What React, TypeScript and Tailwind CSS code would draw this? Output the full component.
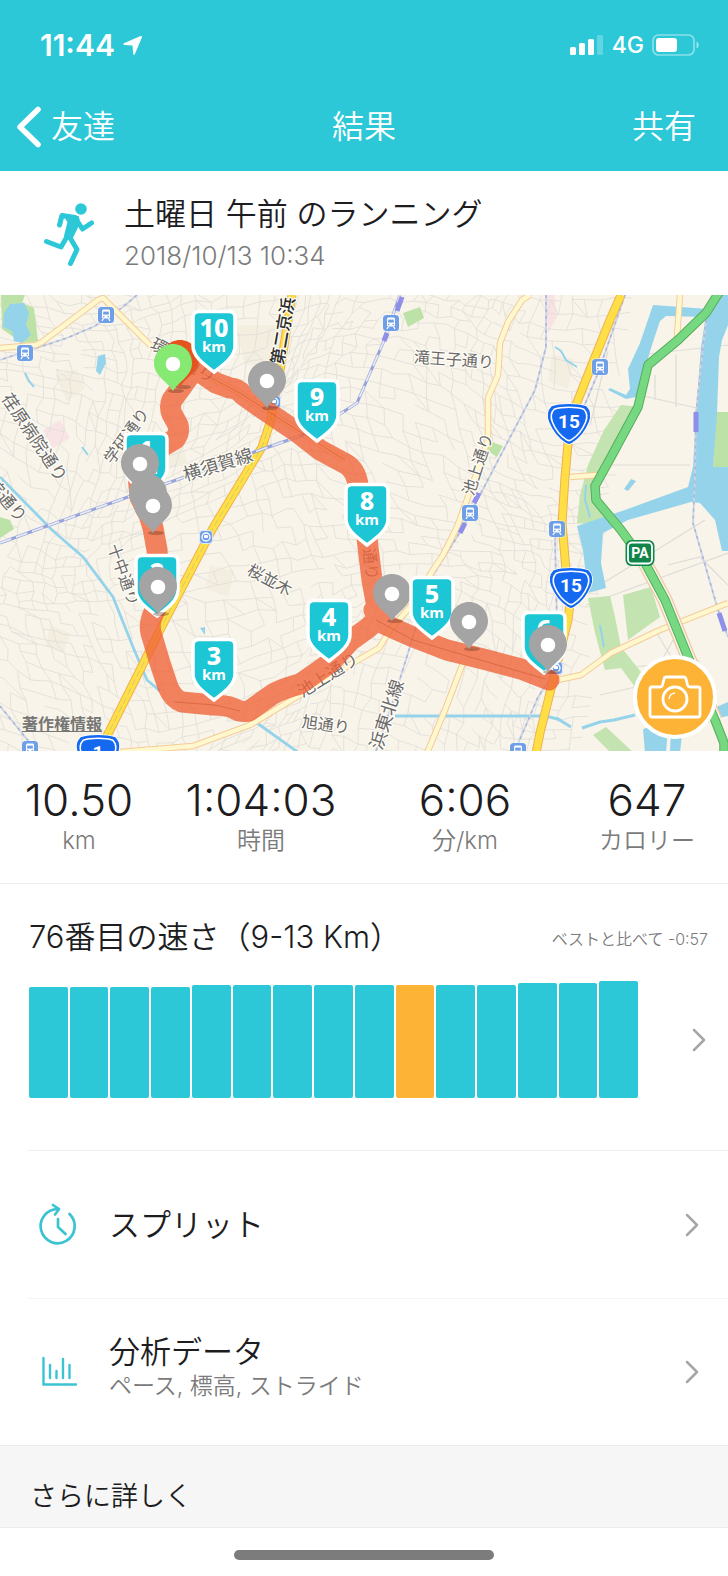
import React from "react";

const sans = "font-['Inter','Noto_Sans_CJK_JP',sans-serif]";

/* ---------- map geometry ---------- */

function createRandom(seed: number) {
  let s = seed;
  return () => {
    s = (s * 1664525 + 1013904223) % 4294967296;
    return s / 4294967296;
  };
}

/** Irregular mesh of minor streets, bent by a slow wave so blocks change direction. */
function buildStreets(): string {
  const rnd = createRandom(41);
  const step = 12;
  const cols = 60;
  const rows = 50;
  const points: [number, number][][] = [];
  for (let j = 0; j <= rows; j++) {
    const row: [number, number][] = [];
    for (let i = 0; i <= cols; i++) {
      const u = i * step - 60;
      const v = j * step - 60;
      row.push([
        u + 26 * Math.sin(v / 62 + u / 140) + 10 * Math.sin(u / 33) + (rnd() - 0.5) * 6,
        v + 30 * Math.sin(u / 75) + 12 * Math.cos(v / 41 + u / 60) + (rnd() - 0.5) * 6,
      ]);
    }
    points.push(row);
  }
  const out: string[] = [];
  const line = (a: [number, number], b: [number, number]) =>
    out.push(`M${a[0].toFixed(1)},${a[1].toFixed(1)}L${b[0].toFixed(1)},${b[1].toFixed(1)}`);
  for (let j = 0; j < rows; j++) {
    for (let i = 0; i < cols; i++) {
      const p = points[j][i];
      if (p[0] > 625 - p[1] * 0.12) continue;
      if (rnd() < 0.8) line(p, points[j][i + 1]);
      if (rnd() < 0.68) line(p, points[j + 1][i]);
      if (rnd() < 0.08) line(p, points[j + 1][i + 1]);
    }
  }
  return out.join("");
}

const STREETS = buildStreets();

const CREAM_ROADS = [
  "M0,53 L36,50 L42,47 L98,5 L103,3 L150,50 L165,62 L200,77 L240,98 L297,135 L345,165",
  "M530,0 L522,5 L508,27 L500,48 L498,80 L488,103 L488,145 L473,188 L457,232 L443,260 L433,275 L410,312 L390,335 L379,353 L353,368 L250,430 L193,451 L120,457",
  "M463,368 L445,415 L427,458",
  "M553,386 L581,380 L611,358 L660,335 L728,308",
  "M680,0 L677,42",
  "M570,182 L598,180",
];

const MAJOR_ROADS = [
  "M292,0 L281,70 L270,128 L262,152 L213,233 L160,335 L105,445",
  "M621,0 L610,25 L591,72 L576,110 L568,148 L565,182 L562,228 L566,275 L570,308 L568,325 L558,365 L550,398 L540,438 L536,458",
];

const HIGHWAY =
  "M720,-4 L706,18 L678,45 L648,70 L638,112 L611,162 L595,191 L596,205 L621,235 L645,268 L665,305 L688,362 L715,425 L724,448 L724,458";

const RAILS = [
  "M0,248 L33,236 L128,202 L182,183 L260,155 L303,140 L340,119 L357,108 L370,78 L383,48 L400,0",
];

const THIN_RAILS = [
  "M137,0 L123,12 L95,31 L67,43 L0,65",
  "M546,0 L546,52 L535,95 L505,152 L480,200 L462,234 L430,285 L412,345 L395,400 L376,456",
  "M625,0 L598,78 L570,145 L560,215 L555,245 L558,372 L538,402 L515,456",
  "M706,25 L696,118 L695,182 L693,228 L718,315 L728,342",
  "M0,411 L30,448",
];

const ROUTE =
  "M196,74 Q188,82 183,90 L172,105 Q169,112 172,119 L178,130 Q180,138 175,144 L160,153 L145,172 Q137,182 139,190 L140,202 L149,220 L153,233 L157,255 L159,285 Q162,298 159,306 L152,322 Q149,331 151,338 L160,368 L168,392 Q173,404 182,407 L213,410 Q225,410 233,413 Q241,418 249,416 L273,399 Q284,393 300,389 L330,368 L350,346 L368,333 Q380,324 377,312 L372,285 L368,252 L364,215 L358,190 Q356,175 346,169 L320,155 L297,137 L260,112 L243,100 Q238,93 230,93 L216,88 L200,77 M374,315 Q378,327 386,330 L413,342 L447,355 L487,365 L521,374 L549,385";

type Label = { text: string; x: number; y: number; angle: number; size: number; strong?: boolean };

/* x / y is the middle of the first glyph */
const LABELS: Label[] = [
  { text: "環七通り", x: 160, y: 52, angle: 29, size: 18 },
  { text: "荏原病院通り", x: 11, y: 107, angle: 56, size: 17 },
  { text: "院通り", x: -4, y: 192, angle: 49, size: 17 },
  { text: "学研通り", x: 112, y: 160, angle: -54, size: 16 },
  { text: "横須賀線", x: 192, y: 177, angle: -17, size: 18 },
  { text: "第二京浜", x: 278, y: 61, angle: -80, size: 17, strong: true },
  { text: "滝王子通り", x: 422, y: 62, angle: 4, size: 16 },
  { text: "池上通り", x: 470, y: 192, angle: -72, size: 16 },
  { text: "十中通り", x: 116, y: 257, angle: 70, size: 16 },
  { text: "池上通り", x: 306, y: 393, angle: -32, size: 17 },
  { text: "桜並木", x: 256, y: 277, angle: 28, size: 16 },
  { text: "旭通り", x: 310, y: 427, angle: 8, size: 16 },
  { text: "浜東北線", x: 378, y: 445, angle: -72, size: 18 },
  { text: "通り", x: 370, y: 261, angle: 83, size: 16 },
];

const STATIONS: [number, number][] = [
  [106, 20],
  [25, 58],
  [391, 28],
  [470, 218],
  [600, 72],
  [557, 234],
  [30, 454],
  [518, 456],
];

function Station({ x, y }: { x: number; y: number }) {
  return (
    <g transform={`translate(${x - 8} ${y - 8})`}>
      <rect x="-0.5" y="-0.5" width="17" height="17" rx="4" fill="#fff" opacity="0.7" />
      <rect width="16" height="16" rx="3.5" fill="#6f9fe6" />
      <path d="M5 2.5h6l1 1v7l-1 1H5l-1-1v-7z" fill="#fff" />
      <rect x="5.2" y="4.6" width="5.6" height="3" fill="#6f9fe6" />
      <circle cx="5.8" cy="9.6" r="0.8" fill="#6f9fe6" />
      <circle cx="10.2" cy="9.6" r="0.8" fill="#6f9fe6" />
      <path d="M5.5 11.5 4 14M10.5 11.5 12 14" stroke="#fff" strokeWidth="1.3" />
    </g>
  );
}

function RoundStation({ x, y }: { x: number; y: number }) {
  return (
    <g transform={`translate(${x} ${y})`}>
      <rect x="-6.5" y="-6.5" width="13" height="13" rx="3.5" fill="#6f9fe6" stroke="#dfe9f8" />
      <circle r="4" fill="none" stroke="#fff" strokeWidth="1.3" />
      <rect x="-2" y="-2" width="4" height="3" rx="0.8" fill="#fff" />
    </g>
  );
}

function RouteShield({ x, y, text }: { x: number; y: number; text: string }) {
  const shape =
    "M-17 -17C-8 -20 8 -20 17 -17C21 -13 21 -7 19 -2C15 8 9 14 3 18C1 19.500 -1 19.500 -3 18C-9 14 -15 8 -19 -2C-21 -7 -21 -13 -17 -17Z";
  return (
    <g transform={`translate(${x} ${y})`}>
      <path d={shape} fill="#1568f0" stroke="#fff" strokeWidth="3" />
      <path d={shape} fill="#1568f0" stroke="#1568f0" strokeWidth="1.500" />
      <path d={shape} transform="scale(0.87)" fill="#1568f0" stroke="#fff" strokeWidth="1.800" />
      <text
        y="4"
        textAnchor="middle"
        className="fill-white font-['Roboto','Liberation_Sans',sans-serif] text-[19px] font-bold"
      >
        {text}
      </text>
    </g>
  );
}

function KmBadge({ x, y, n }: { x: number; y: number; n: number }) {
  return (
    <g transform={`translate(${x} ${y})`}>
      <path
        d="M-15 1.500H15Q21 1.500 21 7.500V36C21 46 12 53 0 62C-12 53 -21 46 -21 36V7.500Q-21 1.500 -15 1.500Z"
        fill="#1cc6d5"
        stroke="#fff"
        strokeWidth="3.500"
      />
      <text y="27" textAnchor="middle" className="fill-white font-['Noto_Sans',sans-serif] text-[25px] font-extrabold">
        {n}
      </text>
      <text y="42" textAnchor="middle" className="fill-white font-['Noto_Sans',sans-serif] text-[15px] font-bold">
        km
      </text>
    </g>
  );
}

function Pin({ x, y, color = "#a4a4a4", dot = true }: { x: number; y: number; color?: string; dot?: boolean }) {
  return (
    <g transform={`translate(${x} ${y})`}>
      <ellipse cx="3" cy="27" rx="8" ry="2" fill="#5a3020" opacity="0.35" />
      <path d="M0 -20C11 -20 19 -11 19 -1C19 12 6 17 0 27C-6 17 -19 12 -19 -1C-19 -11 -11 -20 0 -20Z" fill={color} />
      {dot && <circle r="7.300" fill="#fff" />}
    </g>
  );
}

function RouteMap() {
  return (
    <svg viewBox="0 0 728 456" className="block h-auto w-full" role="img" aria-label="ルート">
      <rect width="728" height="456" fill="#f8f4ea" />
      <path
        d="M235 30h50v40h-40zM55 80l22-6 8 20-18 12zM210 270l24 6-6 26-22-8zM50 330l20 8-6 20-18-6zM150 150l32-4 6 24-30 4zM552 60l22 4-6 30-20-8z"
        fill="#f3eee0"
      />
      <path d="M43 135 60 125 70 143 53 153Z" fill="#f8e4e4" />
      <path d="M546 0H554L557 22 548 38Z" fill="#f8e2e4" />
      <path d={STREETS} fill="none" stroke="#dfddd7" strokeWidth="0.8" />
      <path
        d="M608 56 590 130M572 150 560 228M630 98 728 120M655 80V105M676 60V112M595 170H690M586 310 728 258M600 290 705 225M620 373 700 366M655 335 700 410M640 60 728 50M600 400 690 380M648 390 676 340M668 270 700 262 728 290"
        fill="none"
        stroke="#dddcd6"
        strokeWidth="1.200"
      />

      {/* parks */}
      <path d="M1 0H25L22 8 34 13 38 46 22 48 2 34Z" fill="#bde2a8" />
      <path d="M0 222 10 225 14 234 0 243Z" fill="#bde2a8" />
      <path d="M403 18 420 12 424 23 408 32Z" fill="#bde2a8" />
      <path d="M489 146 503 151 497 162 488 156Z" fill="#bde2a8" />
      <path d="M621 110 640 112 614 160 597 190 600 206 620 226 606 229 577 228 580 200 588 170 604 135Z" fill="#c3e4b0" />
      <path d="M716 117H728V172H713Z" fill="#bde2a8" />
      <path d="M588 303 610 301 615 322 621 352 645 382 635 392 621 373 605 375 595 338Z" fill="#c3e4b0" />
      <path d="M623 300 651 292 660 322 628 345Z" fill="#c3e4b0" />
      <path d="M593 440 606 432 634 458H611Z" fill="#c3e4b0" />

      {/* water */}
      <g fill="#95d3ea">
        <path d="M4 18 10 9 24 8 29 18 26 30 31 40 22 48 14 46 12 36 3 32Z" />
        <path d="M98 61 105 59 106 68 100 80 96 76Z" />
        <path d="M653 10 708 14 704 22 666 21 660 26 652 50 642 84 636 102 626 104 608 95 610 93 626 100 630 94 628 74 640 48Z" />
        <path d="M720 0H728V30L722 45 719 62 717 118 713 172H728V256L722 256 715 225 700 208 691 207 628 225 603 238 601 268 606 293 588 298 583 255 577 231 625 215 688 192 693 172 696 118 701 52 706 20Z" />
        <path d="M643 434 656 430 668 432 666 458H645ZM671 432 683 430 680 458H670Z" />
        <path d="M714 413 728 407V421L718 423ZM624 194 631 184 636 186 628 196Z" />
        <path d="M200 333 205 332 205 340Z" />
      </g>
      <g fill="none" stroke="#95d3ea">
        <path d="M0 182 52 235 83 262 113 302 133 352 147 385 160 396M257 428 299 458" strokeWidth="2.800" />
        <path d="M395 421H480M478 421H545L558 424 571 432M582 433 600 427 614 425 635 420" strokeWidth="3" />
        <path d="M555 52 561 56 566 65 577 72M25 78 29 86 34 92M82 152 88 160M586 190 585 205 590 222M600 330 604 352" strokeWidth="2" />
      </g>

      {/* roads */}
      <g fill="none" strokeLinejoin="round">
        {THIN_RAILS.map((d) => (
          <g key={d}>
            <path d={d} stroke="#ccd4e4" strokeWidth="1.800" />
            <path d={d} stroke="#a9b7dc" strokeWidth="1.600" strokeDasharray="3 4" />
          </g>
        ))}
        {CREAM_ROADS.map((d) => (
          <path key={d} d={d} stroke="#f4cc98" strokeWidth="6.500" />
        ))}
        {CREAM_ROADS.map((d) => (
          <path key={d} d={d} stroke="#fff8cf" strokeWidth="4.500" />
        ))}
        {MAJOR_ROADS.map((d) => (
          <g key={d}>
            <path d={d} stroke="#efb14e" strokeWidth="9" />
            <path d={d} stroke="#ffdf45" strokeWidth="7" />
          </g>
        ))}
        <path d={MAJOR_ROADS[0]} stroke="#b9c37a" strokeWidth="1" strokeDasharray="7 3" opacity="0.7" />
        {RAILS.map((d) => (
          <g key={d}>
            <path d={d} stroke="#97a3da" strokeWidth="3" />
            <path d={d} stroke="#e6eaf5" strokeWidth="1.800" strokeDasharray="12 5" />
          </g>
        ))}
        <path d="M645 268 665 305 688 362 715 425" stroke="#f0c8a0" strokeWidth="15" />
        <path d="M645 268 665 305 688 362 715 425" stroke="#f8f4ea" strokeWidth="12.500" />
        <path d={HIGHWAY} stroke="#55ad5c" strokeWidth="9.500" />
        <path d={HIGHWAY} stroke="#76d880" strokeWidth="7.500" />
        <path
          d="M402 2 397 16M387 38 384 46M479 198 474 208M465 228 460 238M696 117V137M719 318 725 336"
          stroke="#8e8fe8"
          strokeWidth="5"
        />
      </g>

      {LABELS.map((l, i) => (
        <text
          key={i}
          transform={`translate(${l.x} ${l.y}) rotate(${l.angle})`}
          x={-l.size / 2}
          y={l.size * 0.38}
          fontSize={l.size}
          fontWeight={l.strong ? 500 : 400}
          fill={l.strong ? "#2c2c2c" : "#6a6a6a"}
          stroke="#fffdf6"
          strokeWidth="2.500"
          strokeLinejoin="round"
          paintOrder="stroke"
          className="font-['Noto_Sans_CJK_JP',sans-serif]"
        >
          {l.text}
        </text>
      ))}

      {STATIONS.map(([x, y]) => (
        <Station key={`${x}-${y}`} x={x} y={y} />
      ))}
      <RoundStation x={206} y={242} />
      <RoundStation x={274} y={107} />
      <RoundStation x={556} y={373} />

      <RouteShield x={569} y={129} text="15" />
      <RouteShield x={571} y={293} text="15" />
      <RouteShield x={98} y={460} text="1" />
      <g transform="translate(640 258)">
        <rect x="-14.500" y="-13" width="29" height="26" rx="6" fill="#11854a" />
        <rect x="-12" y="-10.500" width="24" height="21" rx="4" fill="none" stroke="#fff" strokeWidth="1.800" />
        <text y="5" textAnchor="middle" className="fill-white font-['Roboto',sans-serif] text-[14px] font-bold">
          PA
        </text>
      </g>

      <g opacity="0.8">
        <path d={ROUTE} fill="none" stroke="#f0643a" strokeWidth="21" strokeLinejoin="round" strokeLinecap="round" />
      </g>
      <path
        d="M200 77 240 98 297 135 345 165M376 325 413 345 470 362 545 384M175 407 215 410 240 416"
        fill="none"
        stroke="#c9502f"
        strokeWidth="1"
        opacity="0.5"
      />

      <Pin x={180} y={65} color="#e4541f" dot={false} />
      <KmBadge x={214} y={15} n={10} />
      <KmBadge x={317} y={84} n={9} />
      <KmBadge x={367} y={188} n={8} />
      <KmBadge x={214} y={343} n={3} />
      <KmBadge x={329} y={304} n={4} />
      <Pin x={392} y={299} />
      <KmBadge x={432} y={281} n={5} />
      <KmBadge x={146} y={137} n={1} />
      <KmBadge x={157} y={259} n={2} />
      <KmBadge x={544} y={316} n={6} />
      <Pin x={173} y={69} color="#86ea72" />
      <Pin x={267} y={86} />
      <Pin x={140} y={169} />
      <Pin x={148} y={199} dot={false} />
      <Pin x={153} y={211} />
      <Pin x={158} y={292} />
      <Pin x={469} y={327} />
      <Pin x={548} y={350} />
    </svg>
  );
}

/* ---------- icons ---------- */

function LocationArrow() {
  return (
    <svg viewBox="0 0 20 20" className="size-5" fill="#fff" aria-hidden="true">
      <path d="M18.700 1.300a1 1 0 0 0-1.100-.3L.9 8.300c-.9.400-.7 1.500.3 1.600l8.300.6.700 8.400c.1 1 1.200 1.200 1.600.3l7.100-16.800a1 1 0 0 0-.2-1.100z" />
    </svg>
  );
}

function Signal() {
  return (
    <svg viewBox="0 0 34 22" className="h-[22px] w-[34px]" fill="#fff" aria-hidden="true">
      <rect x="0" y="13" width="6" height="8" rx="1.500" />
      <rect x="9" y="9" width="6" height="12" rx="1.500" />
      <rect x="18" y="5" width="6" height="16" rx="1.500" />
      <rect x="27" y="1" width="6" height="20" rx="1.500" opacity="0.25" />
    </svg>
  );
}

function Battery() {
  return (
    <svg viewBox="0 0 48 22" className="h-[22px] w-12" aria-hidden="true">
      <rect x="1" y="1" width="41" height="20" rx="5.500" fill="none" stroke="#fff" strokeWidth="1.700" opacity="0.45" />
      <rect x="4" y="4" width="21" height="14" rx="3" fill="#fff" />
      <path d="M44.500 7.500c3 1 3 6 0 7z" fill="#fff" opacity="0.5" />
    </svg>
  );
}

function Runner() {
  return (
    <svg viewBox="0 0 52 64" className="h-16 w-[52px]" aria-hidden="true">
      <circle cx="37" cy="6" r="5.800" fill="#2dc8d8" />
      <g fill="none" stroke="#2dc8d8" strokeLinecap="round" strokeLinejoin="round" strokeWidth="5">
        <path d="M15.500 22 18 12.500 31 14.500 38.500 26 47.500 20" />
        <path d="M2.500 38.500 17 44 24 32" />
        <path d="M25 33 33 46.500 26.500 60.500" />
      </g>
      <path
        d="M20 12 34 14 35 20 27.500 35.500 21 33 24.500 19Z"
        fill="#2dc8d8"
        stroke="#2dc8d8"
        strokeWidth="2"
        strokeLinejoin="round"
      />
    </svg>
  );
}

function Chevron() {
  return (
    <svg viewBox="0 0 14 24" className="h-6 w-[14px] shrink-0" fill="none" aria-hidden="true">
      <path d="M2 2 12 12 2 22" stroke="#a6a6a6" strokeWidth="2.500" strokeLinecap="round" strokeLinejoin="round" />
    </svg>
  );
}

function BackChevron() {
  return (
    <svg viewBox="0 0 26 42" className="h-[42px] w-[26px]" fill="none" aria-hidden="true">
      <path d="M22 3.500 4 21 22 38.500" stroke="#fff" strokeWidth="5.500" strokeLinecap="round" strokeLinejoin="round" />
    </svg>
  );
}

function SplitIcon() {
  return (
    <svg
      viewBox="0 0 40 44"
      className="h-11 w-10"
      fill="none"
      stroke="#3cc3d2"
      strokeWidth="2.700"
      strokeLinecap="round"
      strokeLinejoin="round"
      aria-hidden="true"
    >
      <path d="M31.500 11A17 17 0 1 1 20 6.200" />
      <path d="M15 2 21 6.200 17 11.500" />
      <path d="M20 16V24L27.500 31" />
    </svg>
  );
}

function ChartIcon() {
  return (
    <svg
      viewBox="0 0 40 32"
      className="h-8 w-10"
      fill="none"
      stroke="#3cc3d2"
      strokeWidth="2.400"
      strokeLinecap="round"
      aria-hidden="true"
    >
      <path d="M5.500 2V28.500H38" />
      <path d="M12 9V22M18.500 15V22M25 3V22M31.500 9V22" />
    </svg>
  );
}

function CameraIcon() {
  return (
    <svg
      viewBox="0 0 56 46"
      className="h-[46px] w-14"
      fill="none"
      stroke="#fff"
      strokeWidth="2.800"
      strokeLinejoin="round"
      aria-hidden="true"
    >
      <path d="M5 13H13Q15 13 15.500 11L17 5Q17.500 3 19.500 3H36.500Q38.500 3 39 5L40.500 11Q41 13 43 13H51Q53 13 53 15V41Q53 43 51 43H5Q3 43 3 41V15Q3 13 5 13Z" />
      <circle cx="28" cy="25" r="12" />
      <path d="M22 25A6.500 6.500 0 0 1 28 19" strokeWidth="1.500" />
    </svg>
  );
}

/* ---------- page ---------- */

const STATS = [
  { value: "10.50", unit: "km" },
  { value: "1:04:03", unit: "時間" },
  { value: "6:06", unit: "分/km" },
  { value: "647", unit: "カロリー" },
];

const BARS = [111, 111, 111, 111, 113, 113, 113, 113, 113, 113, 113, 113, 115, 115, 117];
const CURRENT = 9;

export default function App() {
  return (
    <div className={`min-h-screen w-full bg-white font-[350] text-[#1d1d1f] ${sans}`}>
      <header className="bg-[#2dc8d8] text-white">
        <div className="flex h-[90px] items-center justify-between pr-7 pl-10">
          <div className="flex items-center gap-2">
            <span className="text-[30px] leading-8 font-semibold">11:44</span>
            <LocationArrow />
          </div>
          <div className="flex items-center gap-2">
            <Signal />
            <span className="text-[23px] leading-8 font-medium">4G</span>
            <Battery />
          </div>
        </div>
        <nav className="grid h-[81px] grid-cols-3 items-start pt-4 pr-8 pl-4 text-[32px] leading-[42px]">
          <a href="#friends" className="flex items-center gap-[9px]">
            <BackChevron />
            <span>友達</span>
          </a>
          <h1 className="pl-4 text-center">結果</h1>
          <button type="button" className="justify-self-end">
            共有
          </button>
        </nav>
      </header>

      <section className="flex h-[124px] items-center gap-7 pt-1 pl-[44px]">
        <Runner />
        <div>
          <h2 className="text-[31px] leading-[42px]">土曜日 午前 のランニング</h2>
          <p className="text-[26px] leading-[42px] text-[#7b7b7b]">2018/10/13 10:34</p>
        </div>
      </section>

      <section className="relative">
        <RouteMap />
        <a
          href="#legal"
          className="absolute bottom-[15px] left-[22px] text-[16px] leading-6 font-bold text-[#767674] underline"
        >
          著作権情報
        </a>
        <button
          type="button"
          aria-label="写真"
          className="absolute right-[11px] bottom-3 flex size-[84px] items-center justify-center rounded-full border-4 border-white bg-[#fdb436]"
        >
          <CameraIcon />
        </button>
      </section>

      <section className="grid h-[133px] grid-cols-[158fr_206fr_202fr_162fr] border-b border-[#efefef] pt-6 text-center">
        {STATS.map((s) => (
          <div key={s.unit}>
            <div className="text-[44px] leading-[50px]">{s.value}</div>
            <div className="text-[24px] leading-8 text-[#7b7b7b]">{s.unit}</div>
          </div>
        ))}
      </section>

      <section>
        <div className="flex h-[97px] items-center justify-between pt-2 pr-5 pl-[29px]">
          <h2 className="text-[31px] leading-10">76番目の速さ（9-13 Km）</h2>
          <p className="pt-1 text-[16px] leading-10 text-[#7b7b7b]">ベストと比べて -0:57</p>
        </div>
        <div className="flex items-center gap-[54px] pr-[22px] pl-[29px]">
          <div className="flex h-[117px] flex-1 items-end gap-[2px]">
            {BARS.map((h, i) => (
              <div
                key={i}
                className={`flex-1 rounded-xs ${i === CURRENT ? "bg-[#fdb436]" : "bg-[#2dc8d8]"}`}
                style={{ height: h }}
              />
            ))}
          </div>
          <Chevron />
        </div>
      </section>

      <section className="mt-[52px] ml-7">
        <a href="#splits" className="flex h-[148px] items-center border-t border-[#efefef] pr-[29px] pl-[10px]">
          <SplitIcon />
          <span className="flex-1 pl-[31px] text-[31px] leading-10">スプリット</span>
          <Chevron />
        </a>
        <a href="#analysis" className="flex h-[147px] items-center border-t border-[#f4f4f4] pr-[29px] pl-[10px]">
          <ChartIcon />
          <span className="flex flex-1 flex-col pb-2 pl-[31px]">
            <span className="text-[31px] leading-9">分析データ</span>
            <span className="text-[23px] leading-8 text-[#7b7b7b]">ペース, 標高, ストライド</span>
          </span>
          <Chevron />
        </a>
      </section>

      <section className="flex h-[83px] items-center border-y border-[#ececec] bg-[#f6f6f6] pt-5 pl-[30px]">
        <h2 className="text-[27px] leading-10">さらに詳しく</h2>
      </section>

      <footer className="flex h-12 items-end justify-center pb-4">
        <div className="h-[10px] w-[260px] rounded-full bg-[#7c7c7c]" />
      </footer>
    </div>
  );
}
